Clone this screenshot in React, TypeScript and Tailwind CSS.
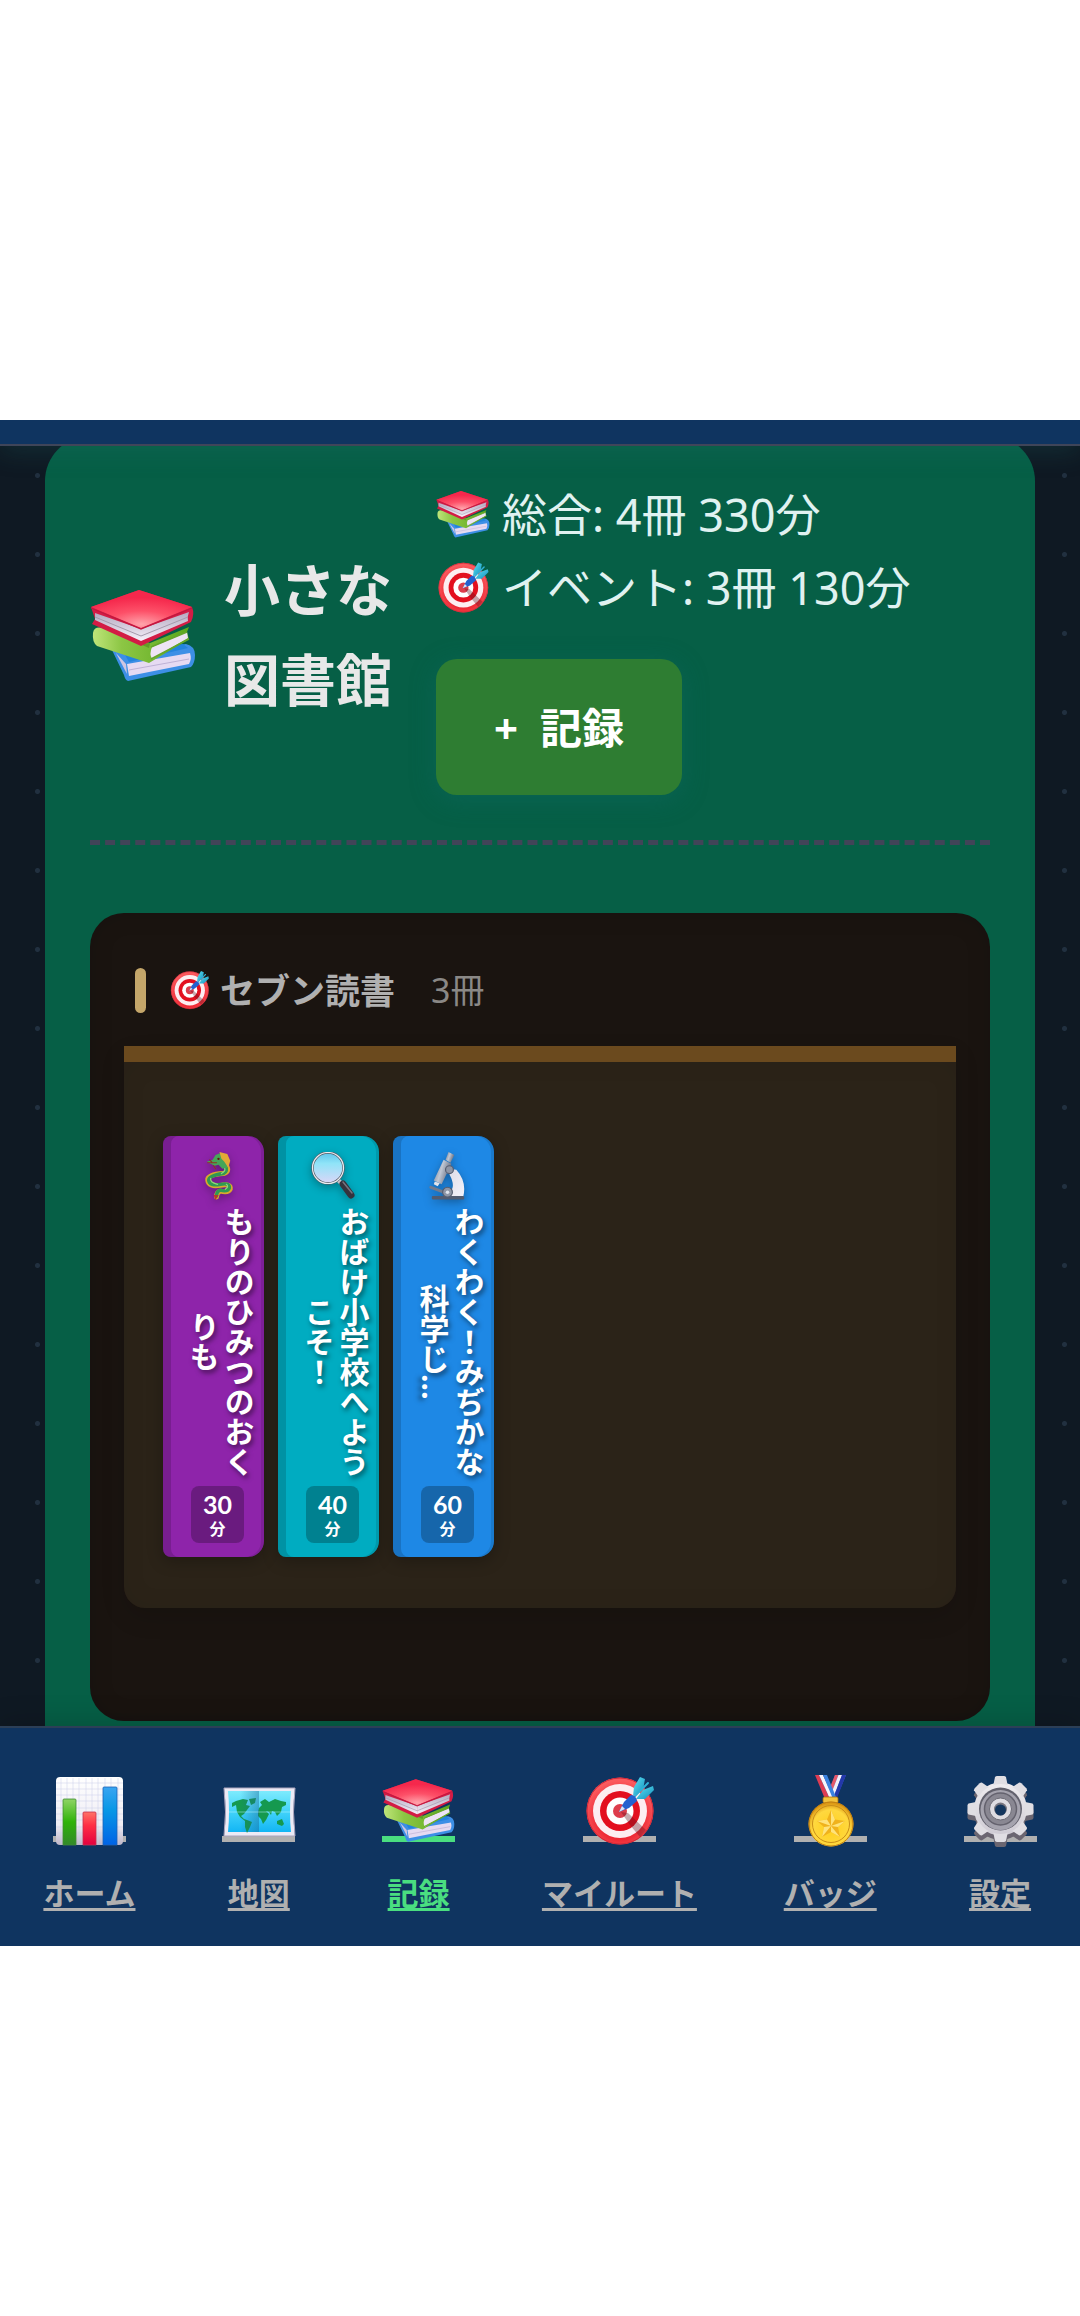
import { useId, type ReactNode } from "react";

type ArtProps = { id: string };

function BooksArt({ id }: ArtProps) {
  return (
    <svg viewBox="-1 -6 106 106" width="73" height="73">
      <defs>
        <radialGradient id={id + "r"} cx="50%" cy="90%" r="70%">
          <stop offset="0" stopColor="#ffa3ab" />
          <stop offset="0.5" stopColor="#fd5068" />
          <stop offset="1" stopColor="#f5284c" />
        </radialGradient>
        <linearGradient id={id + "g"} x1="0" y1="0" x2="1" y2="0">
          <stop offset="0" stopColor="#bfe57a" />
          <stop offset="0.3" stopColor="#8cc644" />
          <stop offset="1" stopColor="#5aa81c" />
        </linearGradient>
        <linearGradient id={id + "w"} x1="0" y1="0" x2="0" y2="1">
          <stop offset="0" stopColor="#b4a9c0" />
          <stop offset="1" stopColor="#f7f1fb" />
        </linearGradient>
      </defs>
      <path d="M21 60 L33 62 L95 54 Q104 56 104 65 Q104 73 100 77 L37 91 Q34 90 33 85 Z" fill="#3d8fe6" />
      <path d="M36 74 L99 63 Q101 69 98 74 L38 86 Z" fill="#e6daf2" />
      <path d="M25 63 L36 84 L35 74 Z" fill="#cfc6e2" />
      <path d="M38 80 L98 69" stroke="#bfb2d6" strokeWidth="1" fill="none" />
      <path d="M33 63 L92 54 L97 58 L38 72 Z" fill="#2384dd" />
      <path d="M2 43 Q3 36 12 38 L59 53 L98 37 L96 42 L98 49 L58 73 L6 56 Q1 52 2 43 Z" fill={`url(#${id}g)`} />
      <path d="M61 57 L96 42 L97 48 L61 69 Q58 64 61 57 Z" fill="#eee4f5" />
      <path d="M60 57 L96 42 M60 69 L98 49" stroke="#65a52b" strokeWidth="1.5" />
      <path d="M12 38 L50 54 L59 53 L58 58 Z" fill="#4c7f1c" opacity="0.5" />
      <path d="M0 17 L48 0 L101 17 Q104 24 100 32 L50 56 L1 34 L4 29 Z" fill="#d31c45" />
      <path d="M4 23 L50 39 L50 51 L4 30 Z" fill={`url(#${id}w)`} />
      <path d="M50 39 L98 22 Q96 27 97 31 L50 51 Z" fill={`url(#${id}w)`} />
      <path d="M4 27 L50 46 L97 27" fill="none" stroke="#a59bad" strokeWidth="1" />
      <path d="M0 17 L48 0 L101 17 L50 38 Z" fill={`url(#${id}r)`} />
      <path d="M0 18 L50 39 L101 18" fill="none" stroke="#c2183f" strokeWidth="1.3" />
    </svg>
  );
}

function TargetArt({ id }: ArtProps) {
  return (
    <>
      <defs>
        <radialGradient id={id + "r"} cx="50%" cy="60%" r="55%">
          <stop offset="0" stopColor="#e80018" />
          <stop offset="0.6" stopColor="#ee2a35" />
          <stop offset="1" stopColor="#fb5a5e" />
        </radialGradient>
        <linearGradient id={id + "c"} x1="0" y1="0" x2="1" y2="1">
          <stop offset="0" stopColor="#5fe3f3" />
          <stop offset="1" stopColor="#128fbd" />
        </linearGradient>
      </defs>
      <circle cx="37" cy="36" r="33.5" fill={`url(#${id}r)`} />
      <circle cx="37" cy="36" r="33" fill="none" stroke="#d22838" strokeWidth="1" />
      <circle cx="37" cy="36" r="27" fill="#fdeef1" />
      <circle cx="37" cy="36" r="20" fill="#e3101f" />
      <circle cx="37" cy="36" r="13.5" fill="#fff" />
      <circle cx="37" cy="36" r="7" fill="#dd3d4c" />
      <path d="M38 37 L45 38 L63 55 L57 62 L47 50 Z" fill="#5d1020" opacity="0.35" />
      <path d="M50 21 L51 12 L57 2 L62 4 L60 15 Z" fill={`url(#${id}c)`} />
      <path d="M53 24 L62 24 L71 15 L70 11 L60 15 Z" fill={`url(#${id}c)`} />
      <path d="M51 22 L65 8" stroke="#2fb0d6" strokeWidth="2" strokeLinecap="round" />
      <path d="M36 37 L41 27 L48 20 Q53 20 54 26 L46 33 Z" fill="#2361cf" />
      <path d="M36 37 L39 31 L42 34 Z" fill="#dce3f5" />
    </>
  );
}

function ChartArt({ id }: ArtProps) {
  return (
    <>
      <defs>
        <linearGradient id={id + "p"} x1="0" y1="0" x2="0" y2="1">
          <stop offset="0" stopColor="#ffffff" />
          <stop offset="0.7" stopColor="#efedf4" />
          <stop offset="1" stopColor="#bdb6c9" />
        </linearGradient>
        <linearGradient id={id + "g"} x1="0" y1="0" x2="0" y2="1">
          <stop offset="0" stopColor="#8fd465" />
          <stop offset="0.5" stopColor="#2fb309" />
          <stop offset="1" stopColor="#33892a" />
        </linearGradient>
        <linearGradient id={id + "r"} x1="0" y1="0" x2="0" y2="1">
          <stop offset="0" stopColor="#ff7468" />
          <stop offset="0.4" stopColor="#ff2f45" />
          <stop offset="1" stopColor="#e3003f" />
        </linearGradient>
        <linearGradient id={id + "b"} x1="0" y1="0" x2="0" y2="1">
          <stop offset="0" stopColor="#3aa5f1" />
          <stop offset="0.4" stopColor="#0897e6" />
          <stop offset="1" stopColor="#0063e6" />
        </linearGradient>
      </defs>
      <rect x="3" y="2" width="67" height="68" rx="4" fill={`url(#${id}p)`} />
      <path
        d="M8 3V69M14 3V69M20 3V69M26 3V69M33 3V69M39 3V69M45 3V69M52 3V69M58 3V69M65 3V69M3 8H70M3 14H70M3 20H70M3 26H70M3 33H70M3 39H70M3 45H70M3 52H70M3 58H70"
        stroke="#c9cdea"
        strokeWidth="0.5"
      />
      <path d="M10 70V25Q10 24 11 24H22Q23 24 23 25V70Z" fill={`url(#${id}g)`} stroke="#3f8d35" strokeWidth="0.8" />
      <path d="M30 70V38Q30 37 31 37H42Q43 37 43 38V70Z" fill={`url(#${id}r)`} stroke="#c73052" strokeWidth="0.8" />
      <path d="M50 70V13Q50 12 51 12H63Q64 12 64 13V70Z" fill={`url(#${id}b)`} stroke="#1c63b8" strokeWidth="0.8" />
    </>
  );
}

function MapArt({ id }: ArtProps) {
  return (
    <>
      <defs>
        <linearGradient id={id + "s"} x1="0" y1="0" x2="0" y2="1">
          <stop offset="0" stopColor="#7eebfd" />
          <stop offset="0.5" stopColor="#42d3fa" />
          <stop offset="1" stopColor="#12b5f4" />
        </linearGradient>
        <linearGradient id={id + "d"} x1="0" y1="0" x2="1" y2="0">
          <stop offset="0.4" stopColor="#1b6798" stopOpacity="0" />
          <stop offset="1" stopColor="#1b6798" stopOpacity="0.45" />
        </linearGradient>
      </defs>
      <path d="M2 13H73Q70 37 73 61H2Q5 37 2 13Z" fill="#eceaf5" stroke="#aaa4bd" strokeWidth="1" />
      <path d="M6 16H69Q67 37 69 57H6Q8 37 6 16Z" fill={`url(#${id}s)`} />
      <path
        d="M10 28L14 26L21 24L26 25L24 30L28 31L25 35L22 39L19 41L22 44L25 45L30 47L28 52L25 58L23 52L23 46L18 42L15 37L14 30L10 32ZM27 24L34 23L33 28L29 30ZM37 33L40 30L38 27L43 24L47 27L53 24L59 26L64 27L64 30L60 32L59 37L55 41L53 37L50 36L49 40L47 37L44 36L47 39L44 45L41 49L39 44L36 41L36 37ZM55 46L60 44L62 49L60 51L55 49Z"
        fill="#15994f"
      />
      <path d="M6 16H37V57H6Q8 37 6 16Z" fill={`url(#${id}d)`} />
      <path d="M7 37H68" stroke="#b9f5ff" strokeWidth="0.7" opacity="0.7" />
    </>
  );
}

function MedalArt({ id }: ArtProps) {
  return (
    <>
      <defs>
        <radialGradient id={id + "m"} cx="50%" cy="60%" r="55%">
          <stop offset="0" stopColor="#ffcf1c" />
          <stop offset="0.75" stopColor="#ffd83f" />
          <stop offset="1" stopColor="#dd9a16" />
        </radialGradient>
      </defs>
      <path d="M41 0H52L42 24H33Z" fill="#3f6fd6" />
      <path d="M41 0H44.500L37 19L34 17Z" fill="#e5586a" />
      <path d="M44.500 0H48L40 21L37 19Z" fill="#f4eff8" />
      <path d="M48 0H52L43 23L40 21Z" fill="#2438ab" />
      <path d="M21 0H25L36 24H31Z" fill="#dd3c53" />
      <path d="M25 0H29L40 24H36Z" fill="#f8f4fb" />
      <path d="M29 0H33L42 22V24H39Z" fill="#3b82e0" />
      <rect x="29" y="22" width="15" height="6" rx="1.500" fill="#f2c33d" stroke="#a8700f" strokeWidth="0.8" />
      <circle cx="37" cy="49" r="22.500" fill={`url(#${id}m)`} />
      <circle cx="37" cy="49" r="22" fill="none" stroke="#bf7d12" strokeWidth="1" />
      <circle cx="37" cy="49" r="18.500" fill="none" stroke="#c98d18" strokeWidth="1" />
      <path d="M37 35L41 44.500L51 46L44 52L46 62L37 57L28 62L30 52L23 46L33 44.500Z" fill="#f0b21c" />
      <path d="M37 35L37 51L41 44.500ZM51 46L37 51L44 52ZM46 62L37 51L37 57ZM28 62L37 51L30 52ZM23 46L37 51L33 44.500Z" fill="#ffe37a" />
    </>
  );
}

function GearArt({ id }: ArtProps) {
  const angles = [0, 45, 90, 135, 180, 225, 270, 315];
  const teeth = angles.map((a) => (
    <path key={a} d="M29 12L31 2Q32 1 33 1H40Q41 1 42 2L44 12Z" transform={`rotate(${a} 36.5 34)`} />
  ));
  return (
    <>
      <defs>
        <linearGradient id={id + "g"} x1="0" y1="0" x2="0" y2="70" gradientUnits="userSpaceOnUse">
          <stop offset="0" stopColor="#f4f2f4" />
          <stop offset="1" stopColor="#c9c5cf" />
        </linearGradient>
      </defs>
      <g fill="#6b6671" transform="translate(0 5)">
        <circle cx="36.500" cy="34" r="26" />
        {teeth}
      </g>
      <g fill={`url(#${id}g)`}>
        <circle cx="36.500" cy="34" r="26.500" />
      </g>
      <g fill="#e0dee3">{teeth}</g>
      <circle cx="36.500" cy="34" r="25" fill={`url(#${id}g)`} />
      <circle cx="36.500" cy="34" r="21.500" fill="#62616d" />
      <circle cx="36.500" cy="35" r="20" fill="#a5a3ae" />
      <circle cx="36.500" cy="34" r="16" fill="#898792" stroke="#64626e" strokeWidth="1.500" />
      <circle cx="36.500" cy="34" r="11" fill="#dedce2" stroke="#6c6b76" strokeWidth="1" />
      <circle cx="36.500" cy="34" r="6.500" fill="#77757f" />
      <circle cx="36.500" cy="35" r="5.500" fill="#14365e" />
    </>
  );
}

function DragonArt() {
  return (
    <svg viewBox="0 0 49 49" width="73" height="73" fill="none" strokeLinecap="round" strokeLinejoin="round">
      <path d="M33 14Q37 20 30 22Q13 23 14 29Q15 36 27 34Q38 32 37 38Q35 42 27 40Q23 41 23 46" stroke="#d9a92c" strokeWidth="5" />
      <path d="M32 14Q35 20 30 22Q15 24 15 29Q16 35 27 33Q37 31 36 37Q34 41 27 39Q23 40 23 45" stroke="#2f9a52" strokeWidth="3.500" />
      <path d="M31 16Q33 19 28 22M17 27Q16 31 24 33M33 33Q36 35 32 38" stroke="#8fd676" strokeWidth="1.300" />
      <path d="M13 10L19 8L22 3L27 1L33 3L35 8L34 16L29 17L25 13L21 14L17 12Z" fill="#46a558" />
      <path d="M26 0L34 2L37 9L35 16L31 10L28 7Z" fill="#e3a936" />
      <path d="M14 11L23 11M20 14L22 17M18 10L16 8" stroke="#8e3424" strokeWidth="1.200" />
      <circle cx="25" cy="7" r="1.200" fill="#5c1a12" />
      <path d="M20 44L22 49L25 44Z" fill="#b9352b" />
    </svg>
  );
}

function MagnifierArt({ id }: ArtProps) {
  return (
    <svg viewBox="0 0 48 48" width="73" height="73">
      <defs>
        <linearGradient id={id + "l"} x1="0" y1="0" x2="0" y2="1">
          <stop offset="0" stopColor="#5cc3ea" />
          <stop offset="0.35" stopColor="#8fe4f8" />
          <stop offset="1" stopColor="#dcd6f7" />
        </linearGradient>
      </defs>
      <path d="M29 28L34 33" stroke="#c4c0c8" strokeWidth="4" />
      <path d="M34 32L42 43" stroke="#35333d" strokeWidth="7" strokeLinecap="round" />
      <path d="M34 30L43 41" stroke="#77747f" strokeWidth="1.500" strokeLinecap="round" />
      <circle cx="19" cy="16" r="15.500" fill={`url(#${id}l)`} stroke="#585b66" strokeWidth="2.500" />
      <circle cx="19" cy="16" r="15.500" fill="none" stroke="#e8eef2" strokeWidth="1.200" />
    </svg>
  );
}

function MicroscopeArt({ id }: ArtProps) {
  return (
    <svg viewBox="0 0 49 49" width="73" height="73">
      <defs>
        <linearGradient id={id + "a"} x1="0" y1="0" x2="1" y2="1">
          <stop offset="0" stopColor="#dcdbe5" />
          <stop offset="1" stopColor="#f4f2fa" />
        </linearGradient>
        <linearGradient id={id + "t"} x1="0" y1="0" x2="1" y2="0.400">
          <stop offset="0" stopColor="#6d7486" />
          <stop offset="0.5" stopColor="#c0c7d4" />
          <stop offset="1" stopColor="#626a7d" />
        </linearGradient>
      </defs>
      <path d="M26 17L33 18Q44 30 40 46H23L26 41Q33 36 26 23Z" fill={`url(#${id}a)`} />
      <path d="M25 0L31 3L27 11L22 8Z" fill={`url(#${id}t)`} />
      <path d="M20 8L28 12L18 33L10 29Z" fill={`url(#${id}t)`} />
      <path d="M11 30L16 32L14 35L10 33Z" fill="#e2e4ec" />
      <path d="M7 36L23 42" stroke="#737a8c" strokeWidth="3" strokeLinecap="round" />
      <rect x="8" y="45" width="33" height="3.500" rx="1" fill="#515b70" />
      <circle cx="26" cy="18" r="4" fill="#8f96a6" stroke="#555d70" strokeWidth="1.200" />
      <circle cx="24" cy="41" r="5" fill="#8f96a6" stroke="#555d70" strokeWidth="1.200" />
      <circle cx="24" cy="41" r="1.800" fill="#dfe3ec" />
    </svg>
  );
}

type IconName = "books" | "target" | "chart" | "map" | "medal" | "gear" | "dragon" | "magnifier" | "microscope";

function Icon({ name, className, underline = false }: { name: IconName; className: string; underline?: boolean }) {
  const id = useId().replace(/[^a-zA-Z0-9]/g, "") + name;
  const art: Record<IconName, ReactNode> = {
    books: <BooksArt id={id} />,
    target: <TargetArt id={id} />,
    chart: <ChartArt id={id} />,
    map: <MapArt id={id} />,
    medal: <MedalArt id={id} />,
    gear: <GearArt id={id} />,
    dragon: <DragonArt />,
    magnifier: <MagnifierArt id={id} />,
    microscope: <MicroscopeArt id={id} />,
  };
  return (
    <svg viewBox="0 0 73 73" aria-hidden="true" className={"block shrink-0 overflow-visible " + className}>
      {underline && <rect x="0" y="61" width="73" height="6" fill="currentColor" />}
      {art[name]}
    </svg>
  );
}

const books: { title: string; minutes: number; icon: IconName; color: string }[] = [
  { title: "もりのひみつのおくりも", minutes: 30, icon: "dragon", color: "bg-[#8e24aa]" },
  { title: "おばけ小学校へようこそ！", minutes: 40, icon: "magnifier", color: "bg-[#00acc1]" },
  { title: "わくわく！みぢかな科学じ…", minutes: 60, icon: "microscope", color: "bg-[#1e88e5]" },
];

const tabs: { label: string; icon: IconName; active?: boolean }[] = [
  { label: "ホーム", icon: "chart" },
  { label: "地図", icon: "map" },
  { label: "記録", icon: "books", active: true },
  { label: "マイルート", icon: "target" },
  { label: "バッジ", icon: "medal" },
  { label: "設定", icon: "gear" },
];

function Book({ title, minutes, icon, color }: (typeof books)[number]) {
  return (
    <li
      className={
        "flex w-[101px] flex-col items-center rounded-l-lg rounded-r-2xl pt-4 pb-[14px] pl-2 text-white shadow-[inset_8px_0_0_rgba(0,0,0,0.15),inset_-3px_0_0_rgba(0,0,0,0.1),0_4px_16px_rgba(0,0,0,0.25)] " +
        color
      }
    >
      <Icon name={icon} className="size-12 drop-shadow-[0_3px_4px_rgba(0,0,0,0.3)]" />
      <h3 className="mt-[6px] h-[272px] pl-[6px] text-center text-[30px] leading-[35px] font-bold [text-shadow:2px_3px_5px_rgba(0,0,0,0.5)] [writing-mode:vertical-rl]">
        {title}
      </h3>
      <p className="mt-2 flex w-[53px] flex-col items-center rounded-lg bg-black/25 pt-[3px] pb-1 font-['Lato','Noto_Sans_CJK_JP',sans-serif] font-bold">
        <span className="text-[25px] leading-[30px]">{minutes}</span>
        <span className="text-base leading-5">分</span>
      </p>
    </li>
  );
}

export default function App() {
  return (
    <div className="bg-white pt-[420px] pb-[370px] font-['Noto_Sans','Noto_Sans_CJK_JP',sans-serif]">
      <div className="overflow-hidden">
        <header className="relative z-10 h-[26px] border-b-2 border-[#3f4559] bg-[#0f3460] shadow-[0_5px_26px_rgba(30,110,110,0.25)]" />

        <main className="overflow-hidden bg-[#0f1923] bg-[radial-gradient(circle,#213040_2px,transparent_3px)] bg-size-[79px_79px] bg-position-[-2px_-10px] px-[45px]">
          <section className="-mt-[10px] rounded-t-[45px] bg-[#065f46] px-[45px] pt-[42px] pb-[5px]">
            <div className="flex items-center border-b-[5px] border-dashed border-[#414458] pb-[45px]">
              <Icon name="books" className="size-[106px]" />
              <h1 className="ml-7 pb-[6px] text-[56px] leading-[90px] font-bold whitespace-nowrap text-[#e8e8e8]">
                小さな
                <br />
                図書館
              </h1>
              <div className="ml-11 text-[45px] leading-[73px] text-[#e0f2f1]">
                <p className="flex items-center gap-3">
                  <Icon name="books" className="size-[54px]" />
                  総合: 4冊 330分
                </p>
                <p className="flex items-center gap-3">
                  <Icon name="target" className="size-[54px]" />
                  イベント: 3冊 130分
                </p>
                <button
                  type="button"
                  className="mt-[35px] block h-[136px] w-[246px] rounded-[21px] bg-[#2e7d32] text-[42px] font-bold whitespace-pre text-white shadow-[0_5px_26px_rgba(15,110,110,0.35)]"
                >
                  +&nbsp;&nbsp;記録
                </button>
              </div>
            </div>

            <section className="mt-[68px] rounded-[34px] bg-[#1a1410] px-[34px] pt-[55px] pb-[113px] shadow-[inset_0_0_24px_rgba(0,0,0,0.12)]">
              <div className="flex h-[45px] items-center pl-[11px]">
                <span className="h-full w-[11px] rounded-full bg-[#c4a66a]" />
                <Icon name="target" className="ml-[23px] size-[41px]" />
                <h2 className="ml-[10px] text-[35px] leading-[45px] font-bold text-[#b0b0b0]">セブン読書</h2>
                <p className="ml-9 text-[34px] leading-[45px] text-[#8a8886]">3冊</p>
              </div>
              <ul className="mt-[33px] flex gap-[14px] rounded-b-[21px] border-t-[16px] border-[#6b4a1e] bg-[#2b2318] px-[39px] pt-[74px] pb-[51px] shadow-[0_10px_24px_rgba(0,0,0,0.12),inset_0_0_26px_rgba(0,0,0,0.06)]">
                {books.map((book) => (
                  <Book key={book.title} {...book} />
                ))}
              </ul>
            </section>
          </section>
        </main>

        <nav className="relative z-10 flex justify-around border-t-2 border-[#2c3f57] bg-[#0f3460] pt-[47px] pb-[30px] shadow-[0_-5px_26px_rgba(0,0,0,0.15)]">
          {tabs.map((tab) => (
            <a
              key={tab.label}
              href="#"
              aria-current={tab.active ? "page" : undefined}
              className={"flex flex-col items-center gap-[22px] " + (tab.active ? "text-[#4ade80]" : "text-[#b0b0b0]")}
            >
              <Icon name={tab.icon} className="size-[73px]" underline />
              <span className="text-[31px] leading-[46px] font-bold underline decoration-3 underline-offset-3 [text-decoration-skip-ink:none]">
                {tab.label}
              </span>
            </a>
          ))}
        </nav>
      </div>
    </div>
  );
}
